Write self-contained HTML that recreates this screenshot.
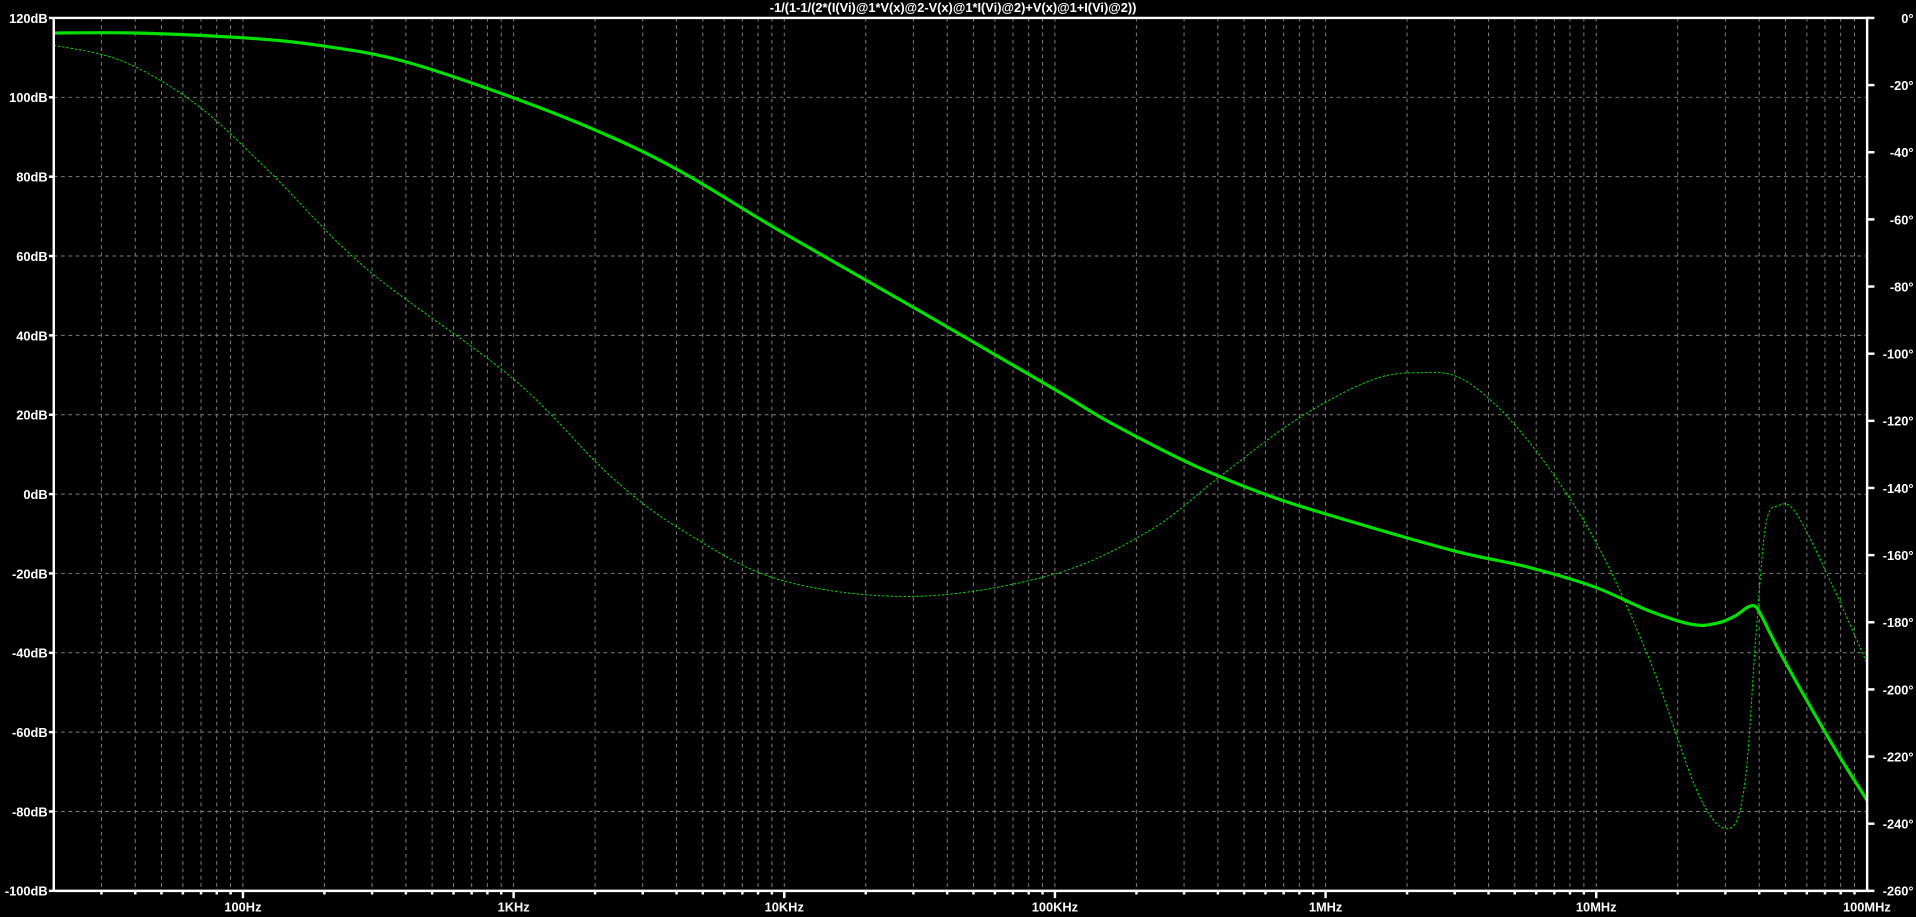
<!DOCTYPE html>
<html><head><meta charset="utf-8"><style>
html,body{margin:0;padding:0;background:#000;overflow:hidden}
svg{display:block}
text{font-family:"Liberation Sans",sans-serif;fill:#fff;font-size:10.5px;font-weight:bold}
</style></head><body>
<svg id="s" width="1916" height="917" viewBox="0 0 1568 750.4" preserveAspectRatio="none" xmlns="http://www.w3.org/2000/svg">
<rect width="1568" height="751" fill="#000"/>
<g id="grid" stroke="#808080" stroke-width="0.8" stroke-dasharray="3 3"></g>
<g id="labels"></g>
<path id="ph" fill="none" stroke="#00e000" stroke-width="0.8" stroke-dasharray="2 1.5"/>
<path id="mag" fill="none" stroke="#00e000" stroke-width="2.6"/>
<g stroke="#fff" stroke-width="2" fill="none">
<line x1="44" y1="14.7" x2="1530" y2="14.7"/>
<line x1="44" y1="729" x2="1530" y2="729"/>
<line x1="44" y1="14.7" x2="44" y2="729"/>
<line x1="1528" y1="14.7" x2="1528" y2="729"/>
</g>
<g id="ticks" stroke="#fff" stroke-width="2"></g>
<text x="780" y="10" text-anchor="middle" font-size="10">-1/(1-1/(2*(I(Vi)@1*V(x)@2-V(x)@1*I(Vi)@2)+V(x)@1+I(Vi)@2))</text>
</svg>
<script>
var NS="http://www.w3.org/2000/svg";
function el(p,t,a,txt){var e=document.createElementNS(NS,t);for(var k in a)e.setAttribute(k,a[k]);if(txt)e.textContent=txt;document.getElementById(p).appendChild(e);}
var L=44,R=1528,T=14.7,B=729,D=221.5;
function fx(f){return L+(Math.log10(f)-Math.log10(20))*D;}
for(var d=1;d<=8;d++){for(var m=1;m<=9;m++){var f=m*Math.pow(10,d);if(f<=20||f>=1e8)continue;var x=fx(f);
el("grid","line",{x1:x,y1:T,x2:x,y2:B});el("ticks","line",{x1:x,y1:B,x2:x,y2:B+(m==1?6:3)});}}
for(var i=1;i<11;i++){var y=T+i*(B-T)/11;el("grid","line",{x1:L,y1:y,x2:R,y2:y});}
var db=[120,100,80,60,40,20,0,-20,-40,-60,-80,-100];
db.forEach(function(v,i){var y=T+i*(B-T)/11;el("labels","text",{x:39,y:y+4,"text-anchor":"end"},v+"dB");el("ticks","line",{x1:40,y1:y,x2:44,y2:y});});
for(var i=0;i<=13;i++){var y=T+i*(B-T)/13;el("labels","text",{x:1566,y:y+4,"text-anchor":"end"},(i==0?"0":"-"+i*20)+"°");el("ticks","line",{x1:1528,y1:y,x2:1534,y2:y});}
var fl=[[100,"100Hz"],[1e3,"1KHz"],[1e4,"10KHz"],[1e5,"100KHz"],[1e6,"1MHz"],[1e7,"10MHz"],[1e8,"100MHz"]];
fl.forEach(function(a){el("labels","text",{x:fx(a[0]),y:746,"text-anchor":"middle"},a[1]);});
function cr(p){var s="M"+p[0][0]+","+p[0][1];for(var i=0;i<p.length-1;i++){var p0=p[i-1]||p[i],p1=p[i],p2=p[i+1],p3=p[i+2]||p2;
s+=" C"+(p1[0]+(p2[0]-p0[0])/6)+","+(p1[1]+(p2[1]-p0[1])/6)+" "+(p2[0]-(p3[0]-p1[0])/6)+","+(p2[1]-(p3[1]-p1[1])/6)+" "+p2[0]+","+p2[1];}return s;}
var mag=[[44,27],[110,27],[200,31],[260,37],[330,50],[420,80],[500,112],[560,142],[640,190],[750,253],[862,318],[900,341],[941,363],[982,383],[1034,404],[1083,420],[1187,450],[1250,464],[1304,480],[1350,500],[1385,511],[1405,510],[1420,504],[1430,497],[1436,496],[1441,503],[1460,540],[1500,610],[1528,655]];
var ph=[[44,37],[100,50],[160,85],[220,140],[300,220],[420,310],[500,390],[560,435],[640,475],[750,488],[862,470],[941,434],[997,391],[1060,344],[1120,312],[1160,305],[1200,312],[1250,360],[1304,440],[1350,540],[1390,650],[1415,678],[1428,640],[1437,520],[1445,430],[1455,414],[1470,420],[1500,480],[1528,543]];
document.getElementById("mag").setAttribute("d",cr(mag));
document.getElementById("ph").setAttribute("d",cr(ph));
</script>
</body></html>
